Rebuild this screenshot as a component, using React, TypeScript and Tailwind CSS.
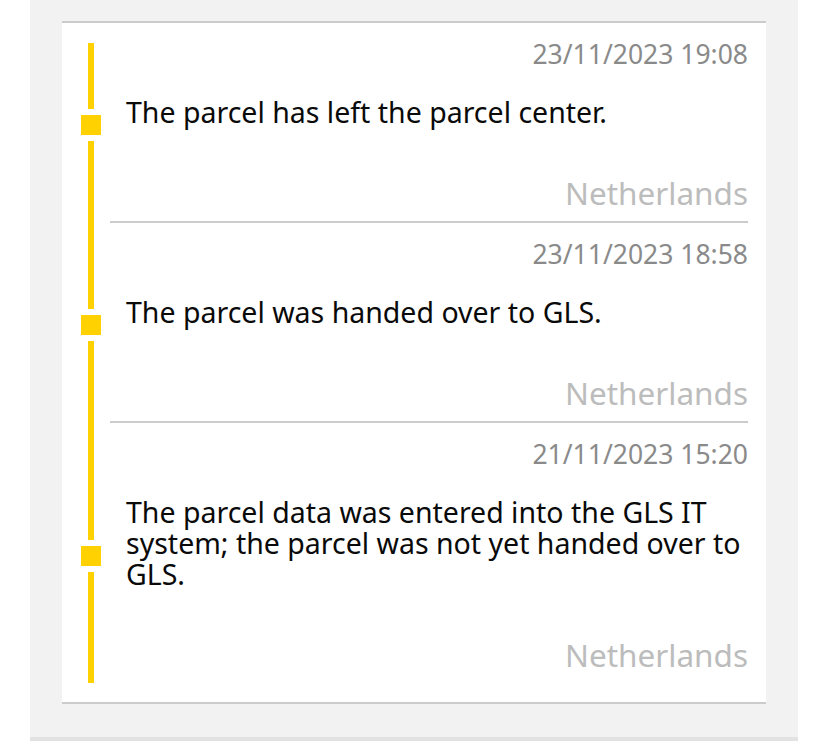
const events = [
  {
    date: '23/11/2023 19:08',
    text: 'The parcel has left the parcel center.',
    place: 'Netherlands',
  },
  {
    date: '23/11/2023 18:58',
    text: 'The parcel was handed over to GLS.',
    place: 'Netherlands',
  },
  {
    date: '21/11/2023 15:20',
    text: 'The parcel data was entered into the GLS IT system; the parcel was not yet handed over to GLS.',
    place: 'Netherlands',
  },
]

function EventRow({
  date,
  text,
  place,
  first,
  last,
}: {
  date: string
  text: string
  place: string
  first: boolean
  last: boolean
}) {
  return (
    <div className="grid grid-cols-[48px_1fr]">
      {/* timeline bar */}
      <div
        className={`col-start-1 row-start-1 row-span-3 ml-[26px] w-[6px] bg-[#ffd100] ${
          first ? 'mt-[20px]' : ''
        } ${last ? 'mb-[19px]' : ''}`}
      />
      <div className="col-start-2 row-start-1 pb-[28px] pt-[16px] text-right text-[26.5px] leading-[30px] text-[#8a8a8a]">
        {date}
      </div>
      <div className="relative z-10 col-start-1 row-start-2 ml-[13px] h-[32px] w-[32px] self-center border-[6px] border-white bg-[#ffd100]" />
      <div className="col-start-2 row-start-2 pb-[24px] pl-[16px] text-[28.5px] leading-[31px] text-[#0a0a0a]">
        {text}
      </div>
      <div
        className={`col-start-2 row-start-3 pt-[24px] text-right text-[31.5px] leading-[34px] text-[#bcbcbc] ${
          last ? 'pb-[30px]' : 'border-b-2 border-[#cccccc] pb-[11px]'
        }`}
      >
        {place}
      </div>
    </div>
  )
}

export default function App() {
  return (
    <div className="min-h-screen bg-white font-['Noto_Sans',sans-serif]">
      <div className="ml-[30px] w-[768px] border-b-[8px] border-[#e2e2e2] bg-[#f2f2f2] px-[32px] pb-[33px] pt-[21px]">
        <div className="border-y-2 border-[#cccccc] bg-white pr-[18px]">
          {events.map((e, i) => (
            <EventRow key={i} {...e} first={i === 0} last={i === events.length - 1} />
          ))}
        </div>
      </div>
    </div>
  )
}
